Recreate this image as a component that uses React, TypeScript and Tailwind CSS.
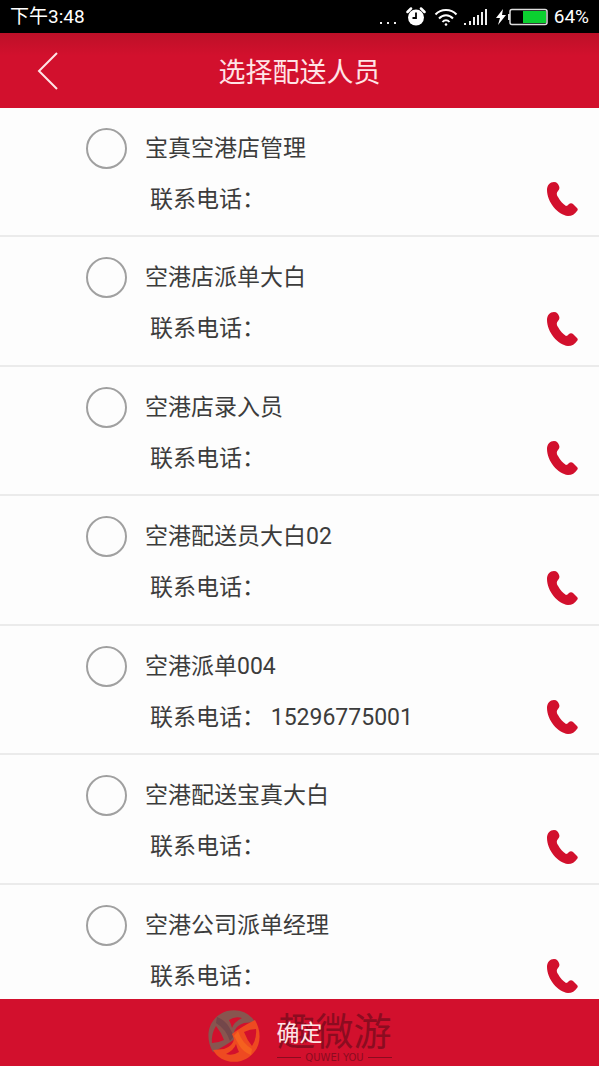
import React, { useState } from 'react';

interface Courier {
    id: number;
    name: string;
    phone: string;
}

const couriers: Courier[] = [
    { id: 1, name: '宝真空港店管理', phone: '' },
    { id: 2, name: '空港店派单大白', phone: '' },
    { id: 3, name: '空港店录入员', phone: '' },
    { id: 4, name: '空港配送员大白02', phone: '' },
    { id: 5, name: '空港派单004', phone: '15296775001' },
    { id: 6, name: '空港配送宝真大白', phone: '' },
    { id: 7, name: '空港公司派单经理', phone: '' },
];

const PhoneIcon = () => (
    <svg viewBox="0 0 32 36" className="w-8 h-9" fill="#d2102d" aria-hidden="true">
        <path d="M7 1c3 0 4 2 5 4s0 4-1 5-2 3 0 6c2 4 5 7 8 9 1 0 2-1 3-2s3-1 4 0l4 4c1 1 1 2 0 3-2 3-5 5-9 5C11 34 0 21 0 9 0 4 3 1 7 1Z" />
    </svg>
);

const StatusBar = () => (
    <div className="flex items-center justify-between h-[33px] shrink-0 px-[10px] bg-black text-white text-[19px] leading-6">
        <span>下午3:48</span>
        <div className="flex items-center">
            <svg viewBox="0 0 20 20" className="w-5 h-5 mr-2" fill="#eee" aria-hidden="true">
                <path d="M2 15h2v2H2zM9 15h2v2H9zM16 15h2v2h-2z" />
            </svg>
            <svg viewBox="0 0 20 20" className="w-5 h-5 mr-2" aria-hidden="true">
                <circle cx="10" cy="10.500" r="8" fill="#fff" />
                <path d="M1.500 5 5 1.500M18.500 5 15 1.500" stroke="#fff" strokeWidth="2.500" strokeLinecap="round" />
                <path d="M10 5.500V11H6.500" fill="none" stroke="#000" strokeWidth="1.800" />
            </svg>
            <svg viewBox="0 0 24 20" className="w-6 h-5 mr-[6px]" fill="none" stroke="#fff" strokeWidth="2" aria-hidden="true">
                <path d="M1.500 7.500C7 1.500 17 1.500 22.500 7.500M5 11.500c4-4.500 10-4.500 14 0M8.500 15c2-2.500 5-2.500 7 0" />
                <circle cx="12" cy="17.500" r="1.300" fill="#fff" stroke="none" />
            </svg>
            <svg viewBox="0 0 24 18" className="w-6 h-[18px] mr-2" fill="#eee" aria-hidden="true">
                <path d="M0 15h2v2H0zM5 13h2v4H5zM9 9h2v8H9zM13 7h2v10h-2zM17 4h2v13h-2zM21 1h2v16h-2z" />
            </svg>
            <svg viewBox="0 0 10 18" className="w-[10px] h-[18px] mr-[2px]" fill="#fff" aria-hidden="true">
                <path d="M7 1 0 10h4l-2 7 8-10H6z" />
            </svg>
            <svg viewBox="0 0 40 18" className="w-10 h-[18px] mr-[6px]" aria-hidden="true">
                <rect x="2" y="1.500" width="37" height="15" rx="2" fill="#000" stroke="#ddd" strokeWidth="1.500" />
                <path d="M0 6h2v6H0z" fill="#ddd" />
                <path d="M15 3h23v12H15z" fill="#0bd030" />
            </svg>
            <span>64%</span>
        </div>
    </div>
);

const Watermark = () => (
    <div className="absolute inset-0 flex justify-center items-center gap-4 pt-[6px] pointer-events-none" aria-hidden="true">
        <svg viewBox="0 0 54 54" className="w-[54px] h-[54px]">
            <g>
                <path d="M6 43C-3 28 1 8 20 2c12-3 23 2 28 11l-11 1q-9 3-10 10l2 5Q20 36 6 43Z" fill="#88554f" />
                <path d="M10 8q8 3 12 10l5 9-4 5q-4-12-14-18Z" fill="#74474a" />
                <path d="M9 17q5 6 8 14-6 3-12 3-1-9 4-17ZM22 11q6-4 13-2-8 4-10 10-1-4-3-8Z" fill="#d2102d" />
            </g>
            <g transform="rotate(180 27 27)">
                <path d="M6 43C-3 28 1 8 20 2c12-3 23 2 28 11l-11 1q-9 3-10 10l2 5Q20 36 6 43Z" fill="#ee4a21" />
                <path d="M10 8q8 3 12 10l5 9-4 5q-4-12-14-18Z" fill="#f5611f" />
                <path d="M9 17q5 6 8 14-6 3-12 3-1-9 4-17ZM22 11q6-4 13-2-8 4-10 10-1-4-3-8Z" fill="#d2102d" />
            </g>
        </svg>
        <div className="flex flex-col items-center pt-1 text-[#8b0c20]">
            <span className="text-[38px] leading-10">趣微游</span>
            <span className="flex items-center gap-1 self-stretch text-[10px] leading-3 font-['DejaVu_Sans']">
                <i className="h-px flex-1 bg-[#8b0c20]" />
                QUWEI YOU
                <i className="h-px flex-1 bg-[#8b0c20]" />
            </span>
        </div>
    </div>
);

const App: React.FC = () => {
    const [selected, setSelected] = useState<number | null>(null);

    return (
        <div className="flex flex-col h-screen overflow-hidden bg-[#fdfdfd] text-[#3c3c3c] font-[Roboto,'Noto_Sans_CJK_SC',sans-serif]">
            <StatusBar />

            <header className="grid grid-cols-[96px_1fr_96px] items-center h-[75px] shrink-0 bg-linear-to-b from-[#bd1028] to-[#d2102d] to-30% text-[#ffe4e6]">
                <button type="button" aria-label="返回" className="flex justify-center items-center h-full">
                    <svg viewBox="0 0 22 38" className="w-[22px] h-[38px]" fill="none" stroke="currentColor" strokeWidth="2" aria-hidden="true">
                        <path d="M20 1 2 19l18 18" />
                    </svg>
                </button>
                <h1 className="pt-1 text-center text-[27px] leading-9">选择配送人员</h1>
            </header>

            <main className="flex-1 min-h-0 overflow-y-auto [scrollbar-width:none]">
                <ul className="flex flex-col min-h-[906px]">
                    {couriers.map((courier) => (
                        <li key={courier.id} className="flex flex-1 pl-[86px] pr-5 border-b-2 border-[#ebebeb]">
                            <input
                                id={`courier-${courier.id}`} name="courier" type="radio"
                                className="appearance-none shrink-0 w-[41px] h-[41px] mt-5 rounded-full border-2 border-[#a0a0a0] checked:border-[#d2102d] checked:border-8"
                                checked={selected === courier.id} onChange={() => setSelected(courier.id)}
                            />
                            <div className="flex-1 pt-5 pl-[18px] text-[23px] leading-[42px]">
                                <label htmlFor={`courier-${courier.id}`} className="block">{courier.name}</label>
                                <p className="pl-[5px] mt-[9px]">联系电话： {courier.phone}</p>
                            </div>
                            <a href={`tel:${courier.phone}`} aria-label={`拨打${courier.name}`} className="self-end mb-[18px]">
                                <PhoneIcon />
                            </a>
                        </li>
                    ))}
                </ul>
            </main>

            <footer className="relative h-[67px] shrink-0 bg-[#d2102d]">
                <Watermark />
                <button type="button" className="relative w-full h-full pt-1 text-[#ffe4e6] text-[23px]">确定</button>
            </footer>
        </div>
    );
};

export default App;
